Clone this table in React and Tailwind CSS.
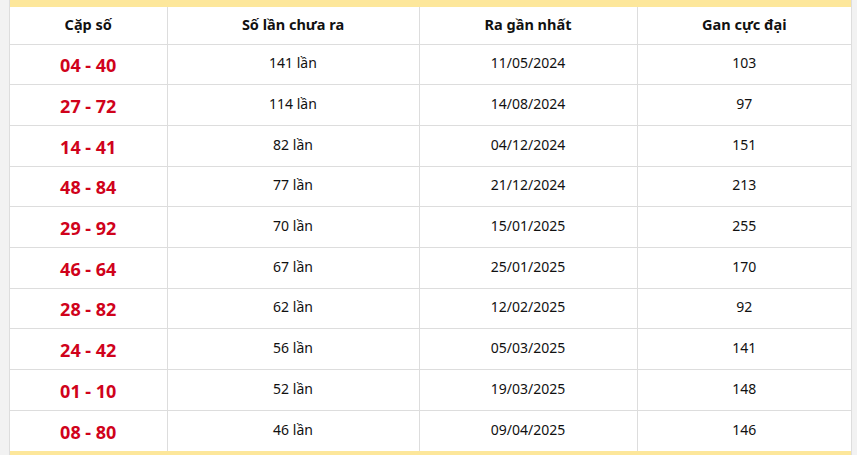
import React from 'react';

const rows = [
  ['04 - 40', '141 lần', '11/05/2024', '103'],
  ['27 - 72', '114 lần', '14/08/2024', '97'],
  ['14 - 41', '82 lần', '04/12/2024', '151'],
  ['48 - 84', '77 lần', '21/12/2024', '213'],
  ['29 - 92', '70 lần', '15/01/2025', '255'],
  ['46 - 64', '67 lần', '25/01/2025', '170'],
  ['28 - 82', '62 lần', '12/02/2025', '92'],
  ['24 - 42', '56 lần', '05/03/2025', '141'],
  ['01 - 10', '52 lần', '19/03/2025', '148'],
  ['08 - 80', '46 lần', '09/04/2025', '146'],
];

export default function App() {
  return (
    <div className="w-[857px] h-[455px] overflow-hidden bg-[#f2f2f2] pl-[9px] pr-[5px] font-['Noto_Sans',sans-serif] text-[#111]">
      <div className="border-x border-[#dddddd] bg-white">
        <div className="h-[7px] bg-[#fde79b]" />
        <table className="w-full border-collapse table-fixed">
          <colgroup>
            <col className="w-[157px]" />
            <col className="w-[252px]" />
            <col className="w-[218px]" />
            <col />
          </colgroup>
          <thead>
            <tr className="h-[37px] text-[14.5px] font-semibold">
              <th className="border-r border-b border-[#dddddd]">Cặp số</th>
              <th className="border-r border-b border-[#dddddd]">Số lần chưa ra</th>
              <th className="border-r border-b border-[#dddddd]">Ra gần nhất</th>
              <th className="border-b border-[#dddddd]">Gan cực đại</th>
            </tr>
          </thead>
          <tbody>
            {rows.map((r, i) => (
              <tr key={i} className={`h-[40.7px] text-center text-[14px] ${i < rows.length - 1 ? 'border-b border-[#dddddd]' : ''}`}>
                <td className="border-r border-[#dddddd] text-[18px] font-bold text-[#d0021b] pt-[3px]">{r[0]}</td>
                <td className="border-r border-[#dddddd] pb-[3px]">{r[1]}</td>
                <td className="border-r border-[#dddddd] pb-[3px]">{r[2]}</td>
                <td className="pb-[3px]">{r[3]}</td>
              </tr>
            ))}
          </tbody>
        </table>
        <div className="h-[10px] bg-[#fde79b]" />
      </div>
    </div>
  );
}
